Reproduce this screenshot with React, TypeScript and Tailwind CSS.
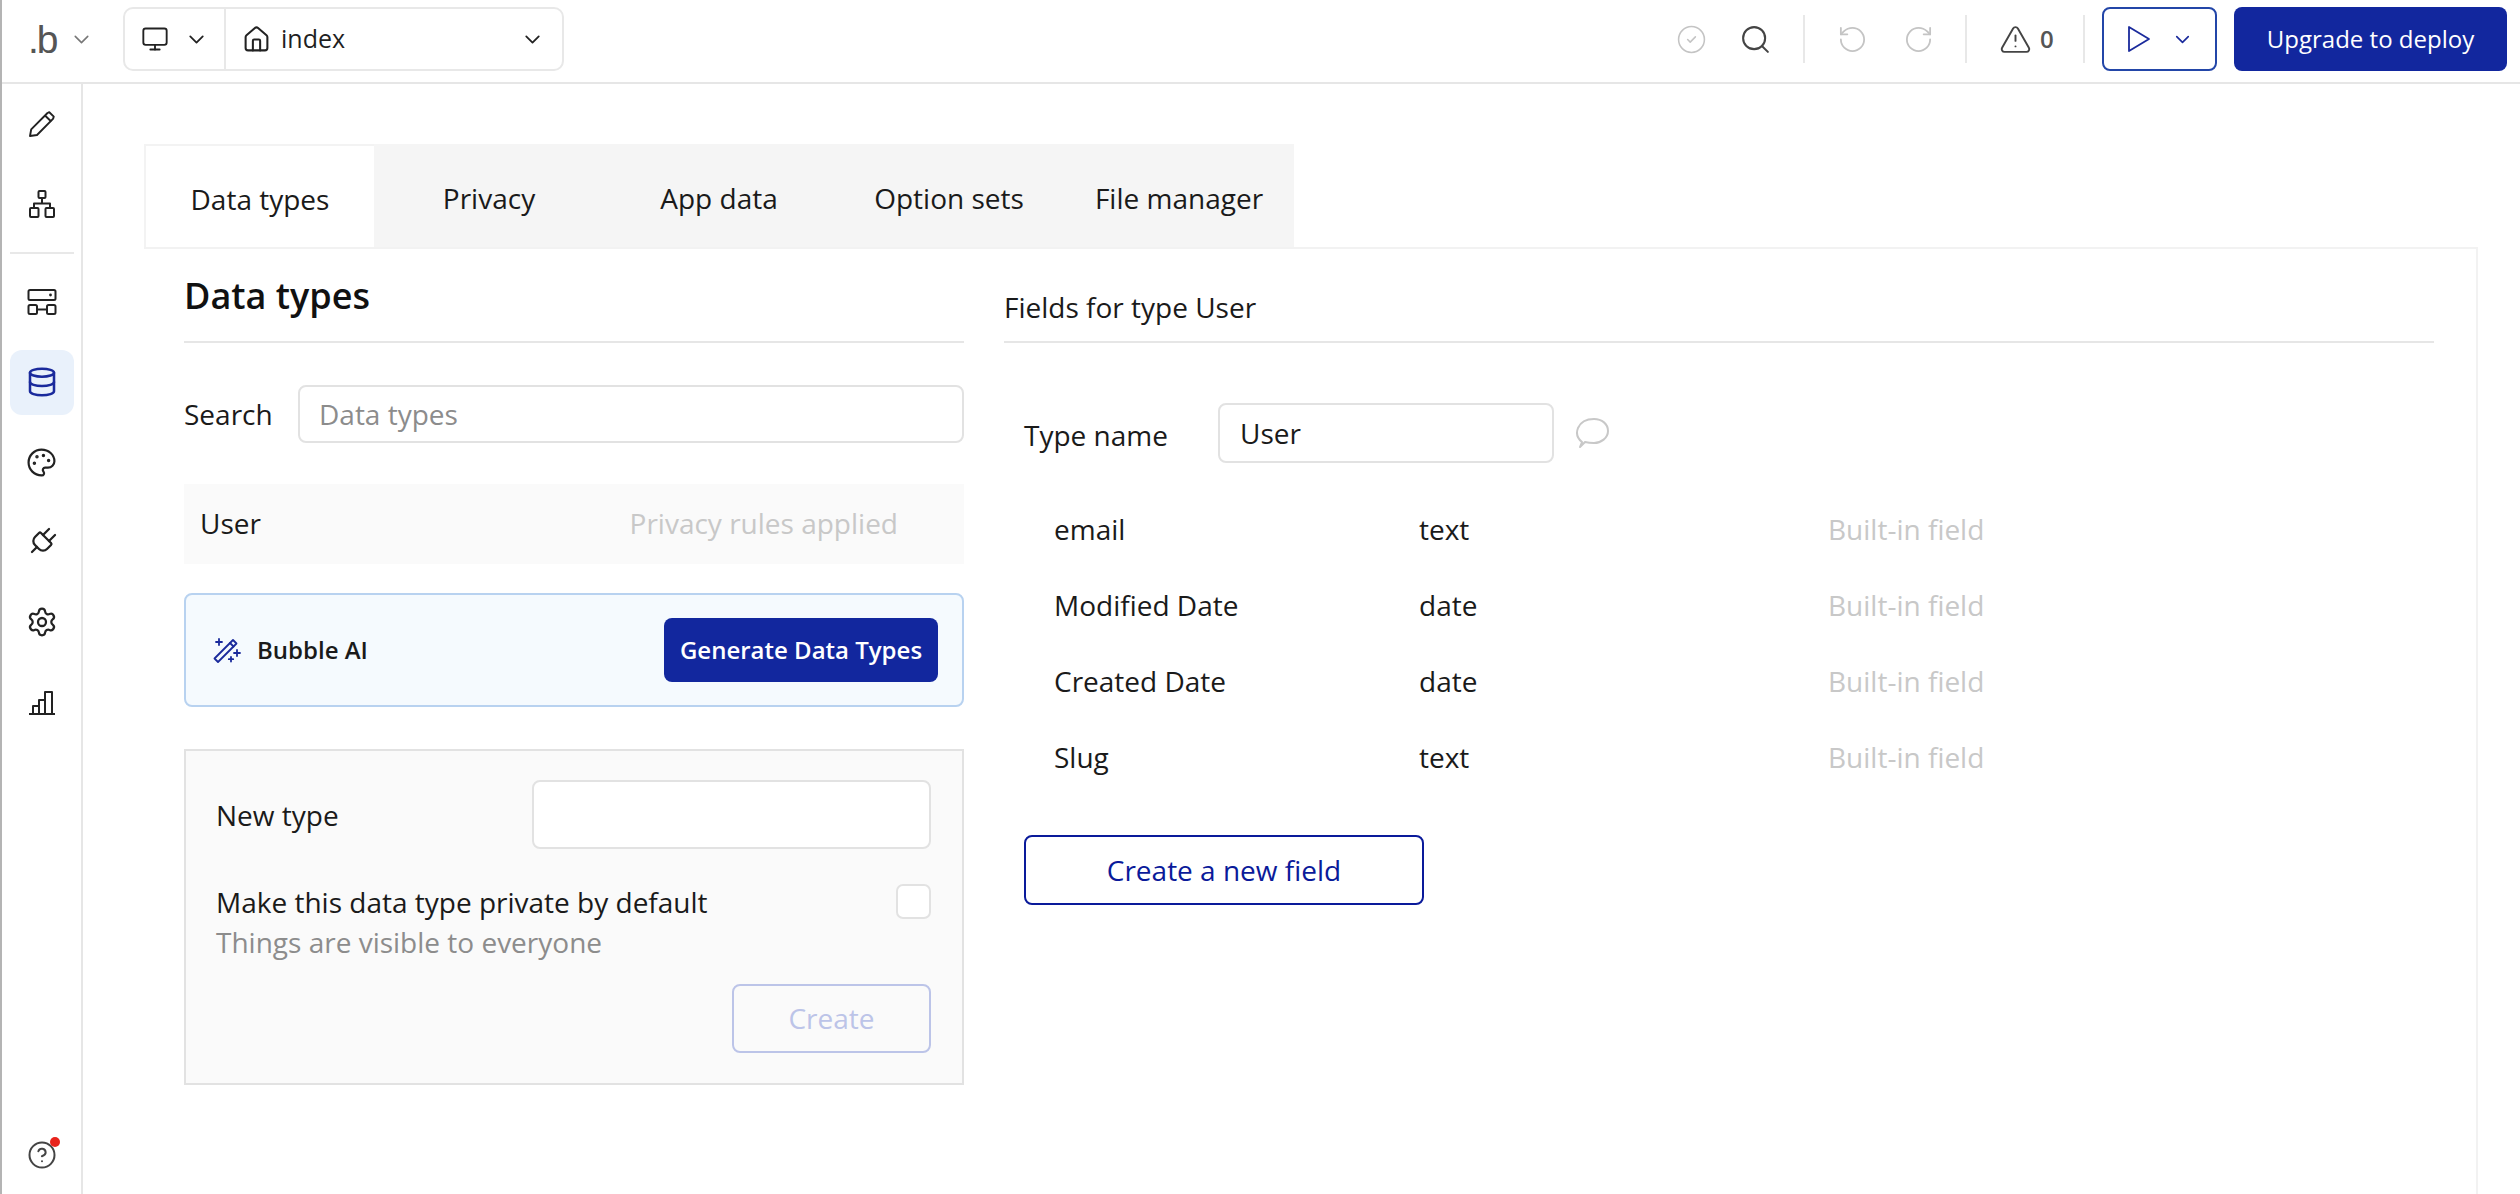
import { ChevronDown, CircleCheck, CircleHelp, Database, House, Monitor, Palette, Plug, RotateCcw, RotateCw, Search, Settings, TriangleAlert } from 'lucide-react';

const FONT = 'font-["Open_Sans",sans-serif]';

// sidebar glyphs that lucide doesn't have in the right shape
function PencilIcon() {
  return (
    <svg width="30" height="30" viewBox="0 0 30 30" fill="none" stroke="#222" strokeWidth="1.9" strokeLinejoin="round">
      <path d="M3 27l1.2-6.6L20.5 4l1.8-.8 4.5 4.4-.6 2L10 26l-7 1Z" />
      <path d="M18 6.5l6.2 6" />
    </svg>
  );
}

function TreeIcon() {
  return (
    <svg width="30" height="30" viewBox="0 0 30 30" fill="none" stroke="#222" strokeWidth="2" strokeLinejoin="round">
      <rect x="11.5" y="2" width="7" height="7" rx="1" />
      <rect x="3" y="19" width="8.5" height="9" rx="1" />
      <rect x="18.5" y="19" width="8.5" height="9" rx="1" />
      <path d="M15 9v5.5M7 19v-4.5h16V19" />
    </svg>
  );
}

function LayoutIcon() {
  return (
    <svg width="30" height="28" viewBox="0 0 30 28" fill="none" stroke="#222" strokeWidth="2" strokeLinejoin="round">
      <rect x="1.5" y="2" width="27" height="10" rx="1.5" />
      <rect x="1.5" y="17" width="8.5" height="9" rx="1.5" />
      <rect x="20" y="17" width="8.5" height="9" rx="1.5" />
      <path d="M10 21.5h10" />
      <circle cx="23.5" cy="7" r="1.4" fill="#222" stroke="none" />
    </svg>
  );
}

function ChartIcon() {
  return (
    <svg width="30" height="30" viewBox="0 0 30 30" fill="none" stroke="#222" strokeWidth="2" strokeLinejoin="round">
      <path d="M2 27h26" />
      <path d="M6 27v-8h6v8M12 27V13h6v14M18 27V5h7v22" />
    </svg>
  );
}

function WandIcon() {
  return (
    <svg width="30" height="30" viewBox="0 0 30 30" fill="none" stroke="#1a2a9c" strokeWidth="1.8" strokeLinejoin="round" strokeLinecap="round">
      <path d="M3.5 23.5 22 5l3.5 3.5L7 27l-3.5-3.5Z" />
      <path d="M19 8l3.5 3.5" />
      <path d="M8 4v6M5 7h6M26 15v6M23 18h6M20 22v4.5M17.8 24.2h4.4" />
    </svg>
  );
}

function PlayIcon() {
  return (
    <svg width="24" height="28" viewBox="0 0 24 28" fill="none" stroke="#1a2a9c" strokeWidth="1.8" strokeLinejoin="round">
      <path d="M2 2v24l20-12L2 2Z" />
    </svg>
  );
}

function CommentIcon() {
  return (
    <svg width="36" height="32" viewBox="0 0 36 32" fill="none" stroke="#c8c8c8" strokeWidth="2" strokeLinejoin="round" className="ml-[20px]">
      <path d="M8 25C3 21 2 16 4 11 7 4 14 2 20 2c8 0 14 5 14 12s-7 12-14 12c-4 0-7-.5-9-1l-5 5 2-5Z" />
    </svg>
  );
}

const RAIL_TOP = [
  { key: 'design', icon: <PencilIcon /> },
  { key: 'tree', icon: <TreeIcon /> },
];

const RAIL_BOTTOM = [
  { key: 'layout', icon: <LayoutIcon /> },
  { key: 'data', icon: <Database size={32} strokeWidth={1.9} color="#1a2a9c" />, active: true },
  { key: 'styles', icon: <Palette size={31} strokeWidth={1.7} color="#222" /> },
  { key: 'plugins', icon: <Plug size={34} strokeWidth={1.6} color="#222" className="rotate-45" /> },
  { key: 'settings', icon: <Settings size={32} strokeWidth={1.7} color="#222" /> },
  { key: 'logs', icon: <ChartIcon /> },
];

const TABS = ['Data types', 'Privacy', 'App data', 'Option sets', 'File manager'];

const FIELDS = [
  { name: 'email', type: 'text' },
  { name: 'Modified Date', type: 'date' },
  { name: 'Created Date', type: 'date' },
  { name: 'Slug', type: 'text' },
];

function Topbar() {
  return (
    <header className="flex h-[84px] shrink-0 items-center border-b-2 border-[#e6e6e6] pb-[4px]">
      <div className="flex w-[121px] items-center pl-[26px]">
        <span className='w-[36px] font-["Liberation_Sans",sans-serif] text-[39px] leading-none tracking-[-2px] text-[#555]'>.b</span>
        <ChevronDown size={25} strokeWidth={1.5} color="#777" className="ml-[5px]" />
      </div>
      <div className="flex h-[64px] w-[441px] items-stretch rounded-[10px] border-2 border-[#e8e8e8]">
        <div className="flex w-[101px] items-center border-r-2 border-[#e8e8e8] pl-[16px]">
          <Monitor size={28} strokeWidth={1.6} color="#222" />
          <ChevronDown size={25} strokeWidth={1.7} color="#222" className="ml-[15px]" />
        </div>
        <div className="flex flex-1 items-center pl-[16px] pr-[17px]">
          <House size={29} strokeWidth={1.7} color="#222" />
          <span className="ml-[10px] flex-1 text-[25px] text-[#1f1f1f]">index</span>
          <ChevronDown size={25} strokeWidth={1.7} color="#222" />
        </div>
      </div>
      <div className="ml-auto flex items-center pr-[13px]">
        <div className="flex w-[64px] justify-center"><CircleCheck size={31} strokeWidth={1.2} color="#c4c4c4" /></div>
        <div className="flex w-[64px] justify-center"><Search size={33} strokeWidth={1.5} color="#444" /></div>
        <div className="ml-[16px] h-[48px] w-[2px] bg-[#e8e8e8]" />
        <div className="ml-[15px] flex w-[64px] justify-center"><RotateCcw size={31} strokeWidth={1.4} color="#c4c4c4" /></div>
        <div className="ml-[2px] flex w-[64px] justify-center"><RotateCw size={31} strokeWidth={1.4} color="#c4c4c4" /></div>
        <div className="ml-[15px] h-[48px] w-[2px] bg-[#e8e8e8]" />
        <div className="ml-[32px] flex w-[72px] items-center">
          <TriangleAlert size={33} strokeWidth={1.4} color="#444" />
          <span className="ml-[8px] text-[24px] font-semibold text-[#555]">0</span>
        </div>
        <div className="ml-[12px] h-[48px] w-[2px] bg-[#e8e8e8]" />
        <div className="ml-[17px] flex h-[64px] w-[115px] items-center rounded-[8px] border-2 border-[#2346a8] pl-[23px]">
          <PlayIcon />
          <ChevronDown size={23} strokeWidth={1.7} color="#1a2a9c" className="ml-[20px]" />
        </div>
        <button className="ml-[17px] h-[64px] w-[273px] rounded-[8px] bg-[#12279e] text-center text-[24px] text-white">
          Upgrade to deploy
        </button>
      </div>
    </header>
  );
}

function Rail() {
  return (
    <nav className="flex w-[81px] shrink-0 flex-col items-center border-r-2 border-[#e6e6e6] pb-[24px]">
      {RAIL_TOP.map((item) => (
        <div key={item.key} className="flex h-[80px] w-[64px] items-center justify-center">{item.icon}</div>
      ))}
      <div className="my-[8px] h-[2px] w-[64px] bg-[#e8e8e8]" />
      {RAIL_BOTTOM.map((item) => (
        <div key={item.key} className="flex h-[80px] w-[64px] items-center justify-center">
          <div className={'flex h-[65px] w-[64px] items-center justify-center rounded-[12px] ' + (item.active ? 'bg-[#e9f1fb]' : '')}>
            {item.icon}
          </div>
        </div>
      ))}
      <div className="relative mt-auto">
        <CircleHelp size={30} strokeWidth={1.6} color="#444" />
        <span className="absolute right-[-3px] top-[-3px] h-[10px] w-[10px] rounded-full bg-[#e8231c]" />
      </div>
    </nav>
  );
}

function DataTypesColumn() {
  return (
    <div className="w-[780px] shrink-0">
      <h2 className="flex h-[94px] items-center border-b-2 border-[#e6e6e6] pt-[2px] text-[36px] font-semibold text-[#111]">Data types</h2>
      <div className="mt-[42px] flex items-center">
        <span className="w-[114px] text-[28px] text-[#1a1a1a]">Search</span>
        <div className="flex h-[58px] flex-1 items-center rounded-[8px] border-2 border-[#e2e2e2] pl-[19px] text-[28px] text-[#8c8c8c]">Data types</div>
      </div>
      <div className="mt-[41px] flex h-[80px] items-center justify-between bg-[#fafafa] pb-[3px] pl-[16px] pr-[66px] text-[28px]">
        <span className="text-[#1a1a1a]">User</span>
        <span className="text-[#c8c8c8]">Privacy rules applied</span>
      </div>
      <div className="mt-[29px] flex h-[114px] items-center rounded-[8px] border-2 border-[#b8d2f0] bg-[#f5fafe] pl-[25px] pr-[24px]">
        <WandIcon />
        <span className="ml-[16px] text-[24px] font-semibold text-[#1a1a1a]">Bubble AI</span>
        <button className="ml-auto h-[64px] w-[274px] rounded-[8px] bg-[#12279e] text-[24px] font-semibold text-white">Generate Data Types</button>
      </div>
      <div className="mt-[42px] h-[336px] border-2 border-[#e2e2e2] bg-[#fafafa] pl-[30px] pr-[31px] pt-[29px]">
        <div className="flex items-center justify-between">
          <span className="text-[28px] text-[#1a1a1a]">New type</span>
          <div className="h-[69px] w-[399px] rounded-[8px] border-2 border-[#e2e2e2] bg-white" />
        </div>
        <div className="mt-[33px] flex items-start justify-between">
          <div className="text-[28px] leading-[40px]">
            <div className="text-[#1a1a1a]">Make this data type private by default</div>
            <div className="text-[#8c8c8c]">Things are visible to everyone</div>
          </div>
          <div className="mt-[2px] h-[35px] w-[35px] rounded-[7px] border-2 border-[#e2e2e2] bg-white" />
        </div>
        <div className="mt-[22px] flex justify-end">
          <button className="h-[69px] w-[199px] rounded-[8px] border-2 border-[#bcc4e8] pb-[2px] text-[28px] text-[#bcc4e8]">Create</button>
        </div>
      </div>
    </div>
  );
}

function FieldsColumn() {
  return (
    <div className="ml-[40px] w-[1430px] shrink-0">
      <h3 className="flex h-[94px] items-center border-b-2 border-[#e6e6e6] pt-[24px] text-[28px] text-[#1a1a1a]">Fields for type User</h3>
      <div className="ml-[20px] mt-[60px] flex items-center">
        <span className="w-[194px] pt-[3px] text-[28px] text-[#1a1a1a]">Type name</span>
        <div className="flex h-[60px] w-[336px] items-center rounded-[8px] border-2 border-[#e2e2e2] pl-[20px] text-[28px] text-[#1a1a1a]">User</div>
        <CommentIcon />
      </div>
      <div className="ml-[50px] mt-[28px] flex flex-col">
        {FIELDS.map((f) => (
          <div key={f.name} className="flex h-[76px] items-center text-[28px]">
            <span className="w-[365px] text-[#1a1a1a]">{f.name}</span>
            <span className="w-[409px] text-[#1a1a1a]">{f.type}</span>
            <span className="text-[#c8c8c8]">Built-in field</span>
          </div>
        ))}
      </div>
      <button className="ml-[20px] mt-[40px] h-[70px] w-[400px] rounded-[8px] border-2 border-[#0a1a9a] text-[28px] text-[#0a1a9a]">Create a new field</button>
    </div>
  );
}

export default function App() {
  return (
    <div className={'flex h-[1194px] w-[2520px] flex-col overflow-hidden border-l-2 border-[#b4b4b4] bg-white ' + FONT}>
      <Topbar />
      <div className="flex min-h-0 flex-1">
        <Rail />
        <main className="flex min-w-0 flex-1 flex-col pl-[61px] pt-[60px]">
          <div className="flex h-[103px] w-[1150px] shrink-0 bg-[#f5f5f5]">
            {TABS.map((t, i) => (
              <div key={t} className={'flex w-[230px] items-center justify-center pt-[5px] text-[28px] text-[#1a1a1a] ' + (i === 0 ? 'border-l-2 border-t-2 border-[#f3f3f3] bg-white' : '')}>
                {t}
              </div>
            ))}
          </div>
          <div className="flex w-[2334px] flex-1 border-r-2 border-t-2 border-[#f2f2f2] pl-[40px]">
            <DataTypesColumn />
            <FieldsColumn />
          </div>
        </main>
      </div>
    </div>
  );
}
